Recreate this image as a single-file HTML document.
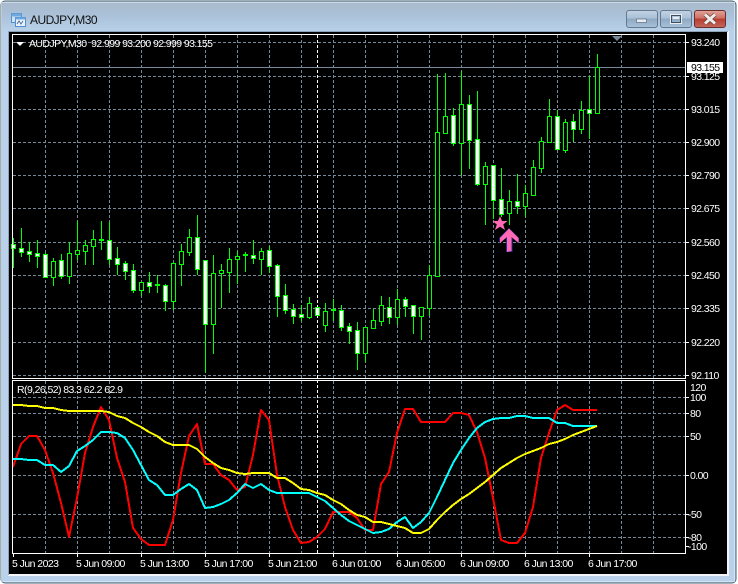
<!DOCTYPE html>
<html>
<head>
<meta charset="utf-8">
<title>AUDJPY,M30</title>
<style>
html,body{margin:0;padding:0;background:#b9d1ea;}
body{width:738px;height:584px;overflow:hidden;}
svg{display:block;}
text{font-family:"Liberation Sans",sans-serif;font-size:10.5px;fill:#fff;letter-spacing:-.55px;white-space:pre;}
.ax{letter-spacing:-.6px;}
</style>
</head>
<body>
<svg width="738" height="584" viewBox="0 0 738 584" xmlns="http://www.w3.org/2000/svg">
<defs>
<linearGradient id="tb" x1="0" y1="0" x2="0" y2="1"><stop offset="0" stop-color="#a9bacb"/><stop offset=".5" stop-color="#abc2da"/><stop offset="1" stop-color="#b9d1ea"/></linearGradient>
<linearGradient id="bn" x1="0" y1="0" x2="0" y2="1"><stop offset="0" stop-color="#c3d3e4"/><stop offset=".45" stop-color="#a9bfd6"/><stop offset=".5" stop-color="#8ea8c2"/><stop offset="1" stop-color="#a9c3dc"/></linearGradient>
<linearGradient id="cl" x1="0" y1="0" x2="0" y2="1"><stop offset="0" stop-color="#e0a59c"/><stop offset=".45" stop-color="#cf6f62"/><stop offset=".5" stop-color="#b83c30"/><stop offset="1" stop-color="#c2695c"/></linearGradient>
</defs>
<!-- window frame -->
<rect x="0" y="0" width="738" height="584" fill="#fff"/>
<rect x="1" y="1" width="735" height="582" rx="4" fill="#b9d1ea" stroke="#44606e"/>
<rect x="2" y="2" width="733" height="30" fill="url(#tb)"/>
<rect x="1.5" y="2.5" width="733" height="579" fill="none" stroke="#e6eef6" stroke-opacity=".6"/>
<rect x="8" y="31" width="721" height="545" fill="#f2f5f9"/>
<rect x="8" y="31" width="1" height="544" fill="#8ea3b8"/>
<rect x="8" y="31" width="720" height="1" fill="#8ea3b8"/>
<rect x="9" y="32" width="718" height="542" fill="#000"/>
<!-- title icon -->
<rect x="11.5" y="13.5" width="10" height="9" fill="#cfe2f5" stroke="#4f8fcf"/>
<rect x="11.5" y="13.5" width="10" height="3" fill="#6fa8dc"/>
<rect x="15.5" y="17.5" width="10" height="9" fill="#e8f2fb" stroke="#4f8fcf"/>
<rect x="15.5" y="17.5" width="10" height="2" fill="#6fa8dc"/>
<path d="M17 24l2-3 2 3 2-3" fill="none" stroke="#4f6f9f"/>
<text x="30" y="24" style="font-size:12px;letter-spacing:-.55px;fill:#111">AUDJPY,M30</text>
<!-- buttons -->
<rect x="626.5" y="10.5" width="31" height="17" rx="2.5" fill="url(#bn)" stroke="#66798c"/>
<rect x="636.5" y="19" width="10" height="3.5" fill="#e8edf3" stroke="#5c6c7c" stroke-width=".7"/>
<rect x="660.5" y="10.5" width="31" height="17" rx="2.5" fill="url(#bn)" stroke="#66798c"/>
<rect x="671.5" y="15.5" width="9" height="7" fill="none" stroke="#3f4f60" stroke-width="1"/>
<rect x="670.5" y="14.5" width="11" height="9" fill="none" stroke="#e8edf3" stroke-width="1"/>
<rect x="673" y="17" width="6" height="2" fill="#e8edf3"/>
<rect x="694.5" y="10.5" width="31" height="17" rx="2.5" fill="url(#cl)" stroke="#6e2e2e"/>
<path d="M705 14.5l10 9M715 14.5l-10 9" stroke="#5c3a38" stroke-width="4.4" fill="none"/>
<path d="M705 14.5l10 9M715 14.5l-10 9" stroke="#f0ebe9" stroke-width="3" fill="none"/>

<!-- grid -->
<path d="M13 42.5H685M13 76.5H685M13 109.5H685M13 142.5H685M13 175.5H685M13 208.5H685M13 242.5H685M13 275.5H685M13 308.5H685M13 342.5H685M13 375.5H685M13 397.5H685M13 413.5H685M13 436.5H685M13 475.5H685M13 514.5H685M13 537.5H685" fill="none" stroke="#778899" stroke-dasharray="3 2"/>
<path d="M45.5 35V378M77.5 35V378M109.5 35V378M141.5 35V378M173.5 35V378M205.5 35V378M237.5 35V378M269.5 35V378M301.5 35V378M333.5 35V378M365.5 35V378M397.5 35V378M429.5 35V378M461.5 35V378M493.5 35V378M525.5 35V378M557.5 35V378M589.5 35V378M621.5 35V378M653.5 35V378M45.5 381V553M77.5 381V553M109.5 381V553M141.5 381V553M173.5 381V553M205.5 381V553M237.5 381V553M269.5 381V553M301.5 381V553M333.5 381V553M365.5 381V553M397.5 381V553M429.5 381V553M461.5 381V553M493.5 381V553M525.5 381V553M557.5 381V553M589.5 381V553M621.5 381V553M653.5 381V553" fill="none" stroke="#778899" stroke-dasharray="3 2"/>
<path d="M317.5 35V553" fill="none" stroke="#fff" stroke-dasharray="3 2"/>
<!-- current price line -->
<path d="M13 67.5H685" stroke="#778899"/>

<!-- wicks -->
<path fill="none" stroke="#00ff00" d="M13.5 238V268M21.5 228V257M29.5 242V262M37.5 240V268M45.5 253V277M53.5 258V286M61.5 254V279M69.5 242V284M77.5 221V260M85.5 240V265M93.5 230V265M101.5 221V250M109.5 222V265M117.5 247V275M125.5 261V280M133.5 264V293M141.5 282V296M149.5 272V293M157.5 275V293M165.5 284V311M173.5 262V310M181.5 244V286M189.5 229V256M197.5 215V275M205.5 260V373M213.5 255V354M221.5 264V308M229.5 248V293M237.5 251V284M245.5 252V272M253.5 240V264M261.5 248V275M269.5 246V273M277.5 264V317M285.5 284V314M293.5 304V324M301.5 305V321M309.5 297V319M325.5 303V332M333.5 299V321M341.5 305V331M349.5 323V344M357.5 322V370M365.5 327V362M373.5 309V329M381.5 296V326M389.5 297V324M397.5 289V325M405.5 297V317M413.5 305V334M421.5 307V340M429.5 265V316M437.5 74V277M445.5 73V133M453.5 108V146M461.5 71V175M469.5 95V169M477.5 91V186M485.5 162V225M493.5 165V219M501.5 168V217M509.5 190V225M517.5 174V214M525.5 185V217M533.5 160V195M541.5 137V173M549.5 99V143M557.5 110V149M565.5 119V153M573.5 114V142M581.5 101V134M589.5 76V139M597.5 54V114"/>
<!-- dojis -->
<path fill="none" stroke="#00ff00" stroke-width="2" d="M99 240h5M155 285h5M243 255h5M331 310h5"/>
<!-- bull bodies (black) -->
<path fill="#000" stroke="#00ff00" d="M51.5 261.5h4V277.5h-4zM67.5 253.5h4V276.5h-4zM75.5 250.5h4V254.5h-4zM83.5 245.5h4V251.5h-4zM91.5 239.5h4V246.5h-4zM139.5 282.5h4V290.5h-4zM171.5 263.5h4V301.5h-4zM179.5 251.5h4V264.5h-4zM187.5 237.5h4V252.5h-4zM211.5 273.5h4V324.5h-4zM219.5 270.5h4V273.5h-4zM227.5 259.5h4V272.5h-4zM235.5 256.5h4V259.5h-4zM259.5 251.5h4V259.5h-4zM307.5 303.5h4V317.5h-4zM323.5 311.5h4V325.5h-4zM363.5 327.5h4V353.5h-4zM371.5 320.5h4V328.5h-4zM379.5 305.5h4V321.5h-4zM395.5 299.5h4V317.5h-4zM419.5 307.5h4V316.5h-4zM427.5 275.5h4V308.5h-4zM435.5 132.5h4V276.5h-4zM443.5 116.5h4V133.5h-4zM459.5 104.5h4V143.5h-4zM483.5 166.5h4V184.5h-4zM507.5 201.5h4V213.5h-4zM523.5 193.5h4V206.5h-4zM531.5 167.5h4V195.5h-4zM539.5 141.5h4V168.5h-4zM547.5 116.5h4V142.5h-4zM563.5 122.5h4V150.5h-4zM579.5 110.5h4V129.5h-4zM595.5 67.5h4V113.5h-4z"/>
<!-- bear bodies (white) -->
<path fill="#fff" stroke="#00ff00" d="M11.5 244.5h4V248.5h-4zM19.5 248.5h4V252.5h-4zM27.5 251.5h4V254.5h-4zM35.5 253.5h4V256.5h-4zM43.5 254.5h4V277.5h-4zM59.5 260.5h4V276.5h-4zM107.5 240.5h4V259.5h-4zM115.5 258.5h4V264.5h-4zM123.5 263.5h4V271.5h-4zM131.5 270.5h4V290.5h-4zM147.5 282.5h4V286.5h-4zM163.5 285.5h4V301.5h-4zM195.5 237.5h4V269.5h-4zM203.5 260.5h4V324.5h-4zM251.5 255.5h4V258.5h-4zM267.5 250.5h4V266.5h-4zM275.5 265.5h4V296.5h-4zM283.5 295.5h4V310.5h-4zM291.5 309.5h4V316.5h-4zM299.5 314.5h4V317.5h-4zM315.5 307.5h4V315.5h-4zM339.5 310.5h4V327.5h-4zM347.5 326.5h4V331.5h-4zM355.5 330.5h4V353.5h-4zM387.5 307.5h4V317.5h-4zM403.5 299.5h4V306.5h-4zM411.5 305.5h4V316.5h-4zM451.5 115.5h4V143.5h-4zM467.5 104.5h4V140.5h-4zM475.5 139.5h4V184.5h-4zM491.5 165.5h4V200.5h-4zM499.5 199.5h4V214.5h-4zM515.5 201.5h4V206.5h-4zM555.5 116.5h4V149.5h-4zM571.5 121.5h4V129.5h-4zM587.5 109.5h4V113.5h-4z"/>

<!-- star & arrow -->
<polygon points="500,216 502,221 507.5,221 503.2,224.5 505,230 500,226.8 495,230 496.8,224.5 492.5,221 498,221" fill="#ff69b4"/>
<polygon points="506,252 506,238 499.5,243.5 499,238 509,228 519,238 519,243.5 512.5,238 512.5,252" fill="#2a2a9a"/>
<polygon points="507,252 507,237 500,243 500,238 509,228.5 518.5,238 518.5,243 511.5,237 511.5,251 " fill="#ff69b4"/>

<!-- indicators -->
<g fill="none" stroke-width="2" stroke-linejoin="round" shape-rendering="crispEdges">
<polyline stroke="#ff0000" points="13,467 21,444 29,436 37,436 45,450 53,473 61,503 69,537 77,498 85,453 93,427 101,407 109,420 117,458 125,482 133,528 141,539 149,545 157,545 165,545 173,520 181,473 189,436 197,424 205,464 213,464 221,475 229,480 237,490 245,487 253,455 261,410 269,420 277,475 285,507 293,530 301,543 309,542 317,537 325,529 333,512 341,512 349,512 357,518 365,530 373,530 381,484 389,472 397,433 405,409 413,409 421,422 429,422 437,422 445,422 453,413 461,413 469,415 477,432 485,458 493,498 501,540 509,543 517,543 525,533 533,507 541,458 549,433 557,410 565,405 573,410 581,410 589,410 597,410"/>
<polyline stroke="#00ffff" points="13,459 21,459 29,460 37,460 45,465 53,465 61,472 69,466 77,451 85,446 93,440 101,432 109,432 117,433 125,438 133,450 141,465 149,480 157,485 165,495 173,495 181,489 189,484 197,490 205,508 213,507 221,504 229,500 237,493 245,484 253,488 261,484 269,490 277,493 285,493 293,493 301,493 309,493 317,497 325,501 333,508 341,515 349,521 357,525 365,529 373,533 381,532 389,529 397,522 405,517 413,528 421,522 429,513 437,497 445,480 453,463 461,450 469,438 477,428 485,422 493,419 501,418 509,418 517,416 525,416 533,418 541,418 549,418 557,423 565,423 573,426 581,426 589,426 597,426"/>
<polyline stroke="#ffff00" points="13,405 21,405 29,406 37,406 45,408 53,408 61,410 69,411 77,411 85,411 93,411 101,411 109,412 117,416 125,418 133,423 141,427 149,432 157,436 165,442 173,445 181,445 189,445 197,449 205,457 213,463 221,468 229,470 237,473 245,474 253,473 261,473 269,473 277,478 285,478 293,483 301,489 309,490 317,493 325,495 333,500 341,504 349,510 357,515 365,517 373,522 381,522 389,524 397,526 405,528 413,533 421,533 429,529 437,520 445,512 453,505 461,499 469,494 477,488 485,482 493,475 501,468 509,463 517,458 525,454 533,451 541,448 549,444 557,442 565,439 573,435 581,432 589,429 597,426"/>
</g>

<!-- pane frames -->
<rect x="12.5" y="34.5" width="673" height="344" fill="none" stroke="#fff"/>
<rect x="12.5" y="380.5" width="673" height="173" fill="none" stroke="#fff"/>
<polygon points="612,36 622,36 617,41" fill="#778899"/>
<!-- axis ticks -->
<path stroke="#fff" d="M686 42.5h3M686 76.5h3M686 109.5h3M686 142.5h3M686 175.5h3M686 208.5h3M686 242.5h3M686 275.5h3M686 308.5h3M686 342.5h3M686 375.5h3M686 397.5h3M686 413.5h3M686 436.5h3M686 475.5h3M686 514.5h3M686 537.5h3M686 546.5h3M13.5 554v3M77.5 554v3M141.5 554v3M205.5 554v3M269.5 554v3M333.5 554v3M397.5 554v3M461.5 554v3M525.5 554v3M589.5 554v3"/>

<!-- legends -->
<polygon points="16,42 24,42 20,46" fill="#fff"/>
<text x="29" y="47" textLength="184" lengthAdjust="spacing" style="letter-spacing:0">AUDJPY,M30  92.999 93.200 92.999 93.155</text>
<text x="17" y="393" textLength="106" lengthAdjust="spacing" style="letter-spacing:0">R(9,26,52) 83.3 62.2 62.9</text>

<!-- price axis -->
<g>
<text class="ax" x="691" y="46">93.240</text>
<text class="ax" x="691" y="80">93.125</text>
<text class="ax" x="691" y="113">93.015</text>
<text class="ax" x="691" y="146">92.900</text>
<text class="ax" x="691" y="179">92.790</text>
<text class="ax" x="691" y="212">92.675</text>
<text class="ax" x="691" y="246">92.560</text>
<text class="ax" x="691" y="279">92.450</text>
<text class="ax" x="691" y="312">92.335</text>
<text class="ax" x="691" y="346">92.220</text>
<text class="ax" x="691" y="379">92.110</text>
</g>
<rect x="687" y="62" width="36" height="11" fill="#fff"/>
<text class="ax" x="691" y="71" style="fill:#000">93.155</text>
<text class="ax" x="690" y="391">120</text>
<text class="ax" x="690" y="401">100</text>
<text class="ax" x="690" y="417">80</text>
<text class="ax" x="690" y="440">50</text>
<text class="ax" x="690" y="479">0.00</text>
<text class="ax" x="688" y="518">-50</text>
<text class="ax" x="688" y="541">-80</text>
<text class="ax" x="688" y="550">-100</text>

<!-- time axis -->
<text x="12" y="567">5 Jun 2023</text>
<text x="76" y="567">5 Jun 09:00</text>
<text x="140" y="567">5 Jun 13:00</text>
<text x="204" y="567">5 Jun 17:00</text>
<text x="268" y="567">5 Jun 21:00</text>
<text x="332" y="567">6 Jun 01:00</text>
<text x="396" y="567">6 Jun 05:00</text>
<text x="460" y="567">6 Jun 09:00</text>
<text x="524" y="567">6 Jun 13:00</text>
<text x="588" y="567">6 Jun 17:00</text>
</svg>
</body>
</html>
